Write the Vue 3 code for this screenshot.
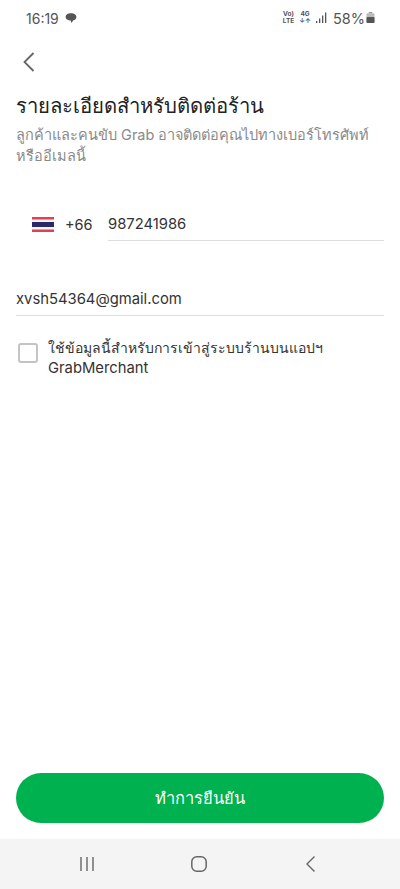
<script setup>
const subtitle = 'ลูกค้าและคนขับ Grab อาจติดต่อคุณไปทางเบอร์โทรศัพท์หรืออีเมลนี้'
</script>

<template>
  <div class="screen">
    <header class="status">
      <div class="status-left">
        <span class="time">16:19</span>
        <svg class="chat" viewBox="0 0 12 12"><path d="M6 1.2c3 0 5.4 1.5 5.4 3.7 0 1.7-1.3 2.9-3.1 3.400L6.600 11 5.700 8.500C2.800 8.400.6 7 .6 4.900.6 2.700 3 1.200 6 1.200z" fill="#555"/></svg>
      </div>
      <div class="status-right">
        <span class="net"><span>Vo)</span><span>LTE</span></span>
        <span class="net"><span>4G</span><span>↓↑</span></span>
        <svg class="signal" viewBox="0 0 12 12"><g fill="#555"><rect x="0" y="9" width="1.300" height="2"/><rect x="3" y="6.500" width="1.300" height="4.500"/><rect x="6" y="3.500" width="1.300" height="7.500"/><rect x="9" y="0.500" width="1.300" height="10.500"/></g></svg>
        <span class="pct">58%</span>
        <svg class="battery" viewBox="0 0 9 12"><rect x="2.800" y="0" width="3.400" height="1.500" fill="#999"/><rect x="0.500" y="1.300" width="8" height="9.700" rx="1" fill="#bbb"/><rect x="0.500" y="5" width="8" height="6" rx="1" fill="#555"/></svg>
      </div>
    </header>

    <button class="back" aria-label="back">
      <svg viewBox="0 0 14 22"><path d="M11.500 2 2.500 11l9 9" fill="none" stroke="#666" stroke-width="1.800"/></svg>
    </button>

    <main class="content">
      <h1 class="title">รายละเอียดสำหรับติดต่อร้าน</h1>
      <p class="sub">{{ subtitle }}</p>

      <div class="phone">
        <svg class="flag" viewBox="0 0 22 15">
          <rect width="22" height="15" fill="#e0414f"/>
          <rect y="2.500" width="22" height="10" fill="#f4f4f4"/>
          <rect y="5" width="22" height="5" fill="#2a2a6a"/>
        </svg>
        <span class="code">+66</span>
        <div class="field phone-field">987241986</div>
      </div>

      <div class="field email">xvsh54364@gmail.com</div>

      <label class="check">
        <span class="box"></span>
        <span class="check-text">ใช้ข้อมูลนี้สำหรับการเข้าสู่ระบบร้านบนแอปฯ <span class="brand">GrabMerchant</span></span>
      </label>
    </main>

    <div class="action">
      <button class="confirm">ทำการยืนยัน</button>
    </div>

    <nav class="navbar">
      <svg class="nav-ico" viewBox="0 0 18 18"><path d="M3 2v14M9 2v14M15 2v14" stroke="#666" stroke-width="1.400" fill="none"/></svg>
      <svg class="nav-ico" viewBox="0 0 18 18"><rect x="1.800" y="1.800" width="14.400" height="14.400" rx="5" stroke="#666" stroke-width="1.500" fill="none"/></svg>
      <svg class="nav-ico" viewBox="0 0 18 18"><path d="M12.500 1.500 5 9l7.500 7.500" stroke="#666" stroke-width="1.400" fill="none"/></svg>
    </nav>
  </div>
</template>

<style>
html, body { margin: 0; background: #fff; }
</style>

<style scoped>
.screen {
  width: 400px;
  height: 889px;
  display: flex;
  flex-direction: column;
  background: #fff;
  font-family: Inter, "Noto Sans", "Liberation Sans", sans-serif;
  overflow: hidden;
}
.status {
  height: 36px;
  padding: 0 25px 0 26px;
  display: flex;
  justify-content: space-between;
  align-items: center;
  color: #555;
  box-sizing: border-box;
}
.status-left, .status-right { display: flex; align-items: center; }
.time { font-size: 14px; }
.chat { width: 12px; height: 12px; margin-left: 6px; }
.net {
  display: flex;
  flex-direction: column;
  align-items: center;
  font-size: 6.500px;
  line-height: 7px;
  font-weight: 700;
  margin-right: 5px;
}
.signal { width: 12px; height: 12px; margin-right: 5px; }
.pct { font-size: 14.500px; }
.battery { width: 9px; height: 12px; margin-left: 1px; }
.back {
  align-self: flex-start;
  margin: 15px 0 0 22px;
  padding: 0;
  width: 14px;
  height: 22px;
  border: 0;
  background: none;
}
.back svg { display: block; width: 14px; height: 22px; }
.content { flex: 1; padding: 19px 16px 0; }
.title { margin: 0; font-size: 20.300px; line-height: 28px; font-weight: 500; color: #222; }
.sub { margin: 4px 0 0; font-size: 14.500px; line-height: 21px; color: #8a8a8a; }
.phone { display: flex; align-items: center; margin-top: 41px; }
.flag { width: 22px; height: 15px; margin-left: 16px; }
.code { margin-left: 11px; width: 43px; font-size: 14.500px; color: #333; }
.field {
  font-size: 14.800px;
  line-height: 20px;
  padding-bottom: 6px;
  border-bottom: 1px solid #ddd;
  color: #333;
}
.phone-field { flex: 1; padding-top: 7px; }
.email { margin-top: 48px; }
.check { display: flex; align-items: flex-start; margin-top: 22px; }
.box {
  flex: none;
  width: 16px;
  height: 16px;
  margin: 5px 10px 0 2px;
  border: 2px solid #c4c4c4;
  border-radius: 3px;
}
.check-text { font-size: 14px; line-height: 20px; color: #333; width: 310px; }
.brand { font-size: 14.800px; }
.action { padding: 0 16px; margin-bottom: 16px; }
.confirm {
  display: block;
  width: 100%;
  height: 50px;
  border: 0;
  border-radius: 25px;
  background: #00b14f;
  color: #fff;
  font: inherit;
  font-size: 16.500px;
  font-weight: 500;
}
.navbar {
  height: 50px;
  background: #f4f4f4;
  display: flex;
  justify-content: space-between;
  align-items: center;
  padding: 0 80px 0 78px;
}
.nav-ico { width: 18px; height: 18px; }
</style>
